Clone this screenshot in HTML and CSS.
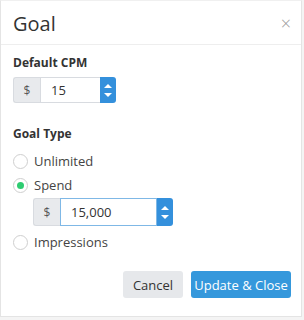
FILE: index.html
```html
<!DOCTYPE html>
<html>
<head>
    <meta name="viewport" content="width=device-width, initial-scale=1.0">
    <link rel="stylesheet" href="styles.css">
</head>
<body>
    <div class="modal">
        <div class="modal-header">
            <div class="modal-title">Goal</div>
            <div class="close">&times;</div>
        </div>
        <div class="modal-body">
            <div class="field-label">Default CPM</div>
            <div class="input-group">
                <span class="addon">$</span>
                <input class="num-input short" type="text" value="15">
                <span class="spinner"><span class="up"></span><span class="down"></span></span>
            </div>

            <div class="field-label type-label">Goal Type</div>
            <label class="radio"><span class="circle"></span>Unlimited</label>
            <label class="radio"><span class="circle checked"></span>Spend</label>
            <div class="input-group nested">
                <span class="addon">$</span>
                <input class="num-input long focus" type="text" value="15,000">
                <span class="spinner"><span class="up"></span><span class="down"></span></span>
            </div>
            <label class="radio"><span class="circle"></span>Impressions</label>

            <div class="actions">
                <button class="btn btn-default">Cancel</button>
                <button class="btn btn-primary">Update &amp; Close</button>
            </div>
        </div>
    </div>
</body>
</html>
```
FILE: styles.css
```css
body {
    margin: 0;
    background: #f4f4f4;
    font-family: 'Open Sans', 'Liberation Sans', sans-serif;
    color: #333;
}

.modal {
    width: 300px;
    height: 315px;
    background: #fff;
    border: 1px solid #e4e4e4;
    border-top-color: #f0f0f0;
}

.modal-header {
    height: 43px;
    border-bottom: 1px solid #eeeeee;
    display: flex;
    align-items: center;
    justify-content: space-between;
    padding: 0 10px 0 12px;
}

.modal-title {
    font-size: 20px;
    color: #333;
    margin-top: 2px;
}

.close {
    font-size: 18px;
    font-weight: 300;
    color: #999;
    line-height: 1;
    margin-top: 1px;
}

.modal-body {
    padding: 10px 10px 0 12px;
}

.field-label {
    font-size: 12px;
    font-weight: bold;
    color: #333;
    line-height: 16px;
    margin-bottom: 6px;
}

.type-label {
    margin-top: 23px;
    margin-bottom: 7px;
}

.input-group {
    display: flex;
    height: 26px;
}

.input-group.nested {
    margin: 1px 0 4px 20px;
    height: 28px;
}

.addon {
    width: 26px;
    background: #e8eaed;
    border: 1px solid #d8dbe0;
    border-right: none;
    border-radius: 3px 0 0 3px;
    font-size: 12px;
    color: #555;
    display: flex;
    align-items: center;
    justify-content: center;
}

.num-input {
    box-sizing: border-box;
    border: 1px solid #d8dbe0;
    border-right: none;
    margin: 0;
    padding: 0 0 0 10px;
    font-family: inherit;
    font-size: 13px;
    color: #333;
    outline: none;
}

.num-input.short { width: 60px; }
.num-input.long { width: 97px; }

.num-input.focus {
    border: 1px solid #7fb8e6;
}

.spinner {
    width: 16px;
    background: #3490dc;
    border-radius: 0 3px 3px 0;
    display: flex;
    flex-direction: column;
    align-items: center;
    justify-content: center;
    gap: 5px;
}

.up, .down {
    width: 0;
    height: 0;
    border-left: 4px solid transparent;
    border-right: 4px solid transparent;
}

.up { border-bottom: 4px solid #fff; }
.down { border-top: 4px solid #fff; }

.radio {
    display: flex;
    align-items: center;
    font-size: 13px;
    color: #444;
    height: 24px;
}

.circle {
    box-sizing: border-box;
    width: 15px;
    height: 15px;
    border: 1px solid #cfcfcf;
    border-radius: 50%;
    margin-right: 6px;
    display: flex;
    align-items: center;
    justify-content: center;
}

.circle.checked::after {
    content: '';
    width: 7px;
    height: 7px;
    border-radius: 50%;
    background: #2ecc71;
}

.actions {
    display: flex;
    justify-content: flex-end;
    gap: 8px;
    margin-top: 17px;
}

.btn {
    height: 27px;
    border: none;
    border-radius: 3px;
    font-family: inherit;
    font-size: 13px;
    padding: 0;
}

.btn-default {
    width: 60px;
    background: #e6e8eb;
    color: #333;
}

.btn-primary {
    width: 100px;
    background: #3598dc;
    color: #fff;
}
```
